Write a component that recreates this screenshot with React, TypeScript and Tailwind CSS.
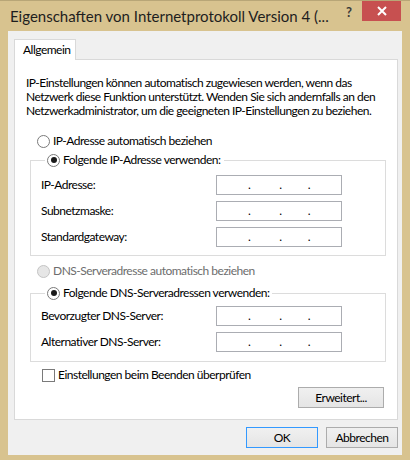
import React from "react";

function Radio({ checked, disabled }: { checked?: boolean; disabled?: boolean }) {
  return (
    <span
      className={
        disabled
          ? "w-[13px] h-[13px] rounded-full border border-[#c4c4c4] bg-[#e6e6e6] flex items-center justify-center shrink-0"
          : "w-[13px] h-[13px] rounded-full border border-[#7a7a7a] bg-white flex items-center justify-center shrink-0"
      }
    >
      {checked && <span className="w-[6px] h-[6px] rounded-full bg-[#1a1a1a]" />}
    </span>
  );
}

function IpBox() {
  return (
    <div className="w-[126px] h-[20px] border border-[#abadb3] bg-white flex items-center text-[12px] leading-[16px] text-black">
      <span className="ml-[31px]">.</span>
      <span className="ml-[29px]">.</span>
      <span className="ml-[26px]">.</span>
    </div>
  );
}

function Row({ label }: { label: string }) {
  return (
    <div className="grid grid-cols-[175px_126px] items-center">
      <span className="whitespace-nowrap">{label}</span>
      <IpBox />
    </div>
  );
}

export default function App() {
  return (
    <div className="w-[410px] h-[460px] bg-[#d8c38f] border-t border-[#b8a677] font-['Lato',sans-serif] text-[12px] leading-[14px] text-black flex flex-col overflow-hidden">
      {/* Title bar */}
      <div className="h-[30px] flex items-start shrink-0">
        <div className="pl-[10px] pt-[5px] text-[15px] leading-[20px] text-[#1e1e1e] whitespace-nowrap">
          Eigenschaften von Internetprotokoll Version 4 (...
        </div>
        <div className="ml-auto flex items-start">
          <span className="mt-[3px] mr-[10px] text-[13px] leading-[16px] font-bold text-[#3a3a3a]">?</span>
          <div className="w-[39px] h-[20px] bg-[#c75050] flex items-center justify-center mr-[9px]">
            <svg width="10" height="10" viewBox="0 0 10 10">
              <path d="M1 1 L9 9 M9 1 L1 9" stroke="white" strokeWidth="2" />
            </svg>
          </div>
        </div>
      </div>

      {/* Client area */}
      <div className="mx-[8px] h-[424px] bg-[#f0f0f0] flex flex-col pt-[8px] pl-[6px] pr-[4px] shrink-0 tracking-[-0.5px]">
        {/* Tab */}
        <div className="flex">
          <div className="w-[62px] h-[21px] -mb-px relative z-10 bg-white border border-b-0 border-[#d9d9d9] pl-[8px] leading-[20px]">
            Allgemein
          </div>
        </div>

        {/* Panel */}
        <div className="h-[361px] bg-white border border-[#d9d9d9] flex flex-col">
          <p className="ml-[11px] mt-[16px] whitespace-nowrap">
            IP-Einstellungen können automatisch zugewiesen werden, wenn das
            <br />
            Netzwerk diese Funktion unterstützt. Wenden Sie sich andernfalls an den
            <br />
            Netzwerkadministrator, um die geeigneten IP-Einstellungen zu beziehen.
          </p>

          <label className="ml-[22px] mt-[15px] h-[16px] flex items-center gap-[3px]">
            <Radio />
            <span>IP-Adresse automatisch beziehen</span>
          </label>

          <fieldset className="ml-[15px] mt-[3px] w-[356px] border border-[#dcdcdc] pl-[10px] pb-[8px]">
            <legend className="ml-[4px] pl-[2px] pr-[3px] h-[16px] flex items-center gap-[3px]">
              <Radio checked />
              <span>Folgende IP-Adresse verwenden:</span>
            </legend>
            <div className="flex flex-col gap-[6px] mt-[7px]">
              <Row label="IP-Adresse:" />
              <Row label="Subnetzmaske:" />
              <Row label="Standardgateway:" />
            </div>
          </fieldset>

          <label className="ml-[22px] mt-[7px] h-[16px] flex items-center gap-[3px] text-[#6d6d6d]">
            <Radio disabled />
            <span>DNS-Serveradresse automatisch beziehen</span>
          </label>

          <fieldset className="ml-[15px] mt-[6px] w-[356px] border border-[#dcdcdc] pl-[10px] pb-[9px]">
            <legend className="ml-[4px] pl-[2px] pr-[3px] h-[16px] flex items-center gap-[3px]">
              <Radio checked />
              <span>Folgende DNS-Serveradressen verwenden:</span>
            </legend>
            <div className="flex flex-col gap-[6px] mt-[5px]">
              <Row label="Bevorzugter DNS-Server:" />
              <Row label="Alternativer DNS-Server:" />
            </div>
          </fieldset>

          <label className="ml-[27px] mt-[5px] h-[16px] flex items-center gap-[3px]">
            <span className="w-[13px] h-[13px] border border-[#7a7a7a] bg-white shrink-0" />
            <span>Einstellungen beim Beenden überprüfen</span>
          </label>

          <div className="flex justify-end mr-[13px] mt-[4px]">
            <button className="w-[86px] h-[21px] border border-[#acacac] bg-linear-to-b from-[#f0f0f0] to-[#e5e5e5] text-[12px] leading-[14px] tracking-[-0.5px]">
              Erweitert...
            </button>
          </div>
        </div>

        {/* Dialog buttons */}
        <div className="flex justify-end gap-[8px] mt-[7px]">
          <button className="w-[72px] h-[21px] border border-[#3399ff] bg-linear-to-b from-[#f0f0f0] to-[#e5e5e5] text-[12px] leading-[14px] tracking-[-0.5px]">
            OK
          </button>
          <button className="w-[72px] h-[21px] border border-[#acacac] bg-linear-to-b from-[#f0f0f0] to-[#e5e5e5] text-[12px] leading-[14px] tracking-[-0.5px]">
            Abbrechen
          </button>
        </div>
      </div>
    </div>
  );
}
